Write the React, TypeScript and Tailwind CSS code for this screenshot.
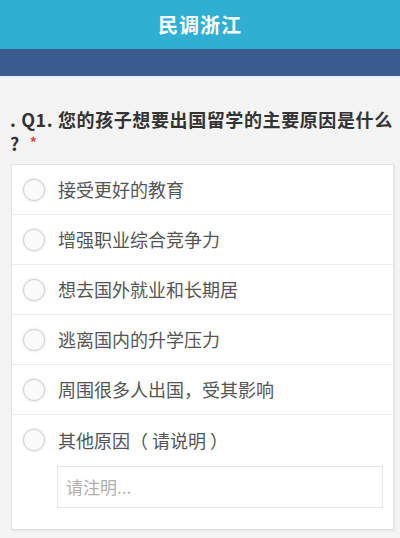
import React from 'react';

const options = [
  '接受更好的教育',
  '增强职业综合竞争力',
  '想去国外就业和长期居',
  '逃离国内的升学压力',
  '周围很多人出国，受其影响',
];

const Radio = () => (
  <span className="w-[22px] h-[22px] shrink-0 rounded-full border border-[#d2d2d2] bg-[#fafafa] shadow-[0_0_3px_rgba(0,0,0,0.14)]" />
);

export default function App() {
  return (
    <div
      className="w-[400px] h-[538px] bg-[#f4f4f4] overflow-hidden"
      style={{ fontFamily: '"Noto Sans CJK SC", "Noto Sans", sans-serif' }}
    >
      {/* 顶部标题 */}
      <div className="h-[49px] bg-[#2fb0d2] flex items-center justify-center">
        <span className="text-white text-[20px] font-bold tracking-[1px]">民调浙江</span>
      </div>
      <div className="h-[27px] bg-[#3a5b8e]" />
      <div className="h-[2px] bg-[#e6eef8]" />

      {/* 题目 */}
      <div className="pt-[30px] pl-[10px] pr-[4px] text-[18px] leading-[23px] font-bold text-[#333] tracking-[0.6px]">
        . Q1. 您的孩子想要出国留学的主要原因是什么 ?
        <span className="ml-[10px] text-[#e0403c] text-[14px] leading-[23px] align-[3px]">*</span>
      </div>

      {/* 选项 */}
      <div className="mt-[9px] ml-[11px] mr-[6px] bg-white border border-[#e3e3e3] shadow-[1px_1px_2px_rgba(0,0,0,0.06)]">
        {options.map((o) => (
          <div key={o} className="h-[50px] flex items-center gap-[13px] pl-[11px] border-b border-[#ececec]">
            <Radio />
            <span className="text-[18px] text-[#555]">{o}</span>
          </div>
        ))}
        <div className="pt-[14px] pb-[21px] pl-[11px] pr-[10px]">
          <div className="flex items-center gap-[13px] h-[22px]">
            <Radio />
            <span className="text-[18px] text-[#555]">其他原因（ 请说明 ）</span>
          </div>
          <div className="mt-[15px] ml-[34px] h-[42px] border border-[#e6e6e6] flex items-center px-[8px] text-[17px] text-[#b0b0b0]">
            请注明...
          </div>
        </div>
      </div>
    </div>
  );
}
